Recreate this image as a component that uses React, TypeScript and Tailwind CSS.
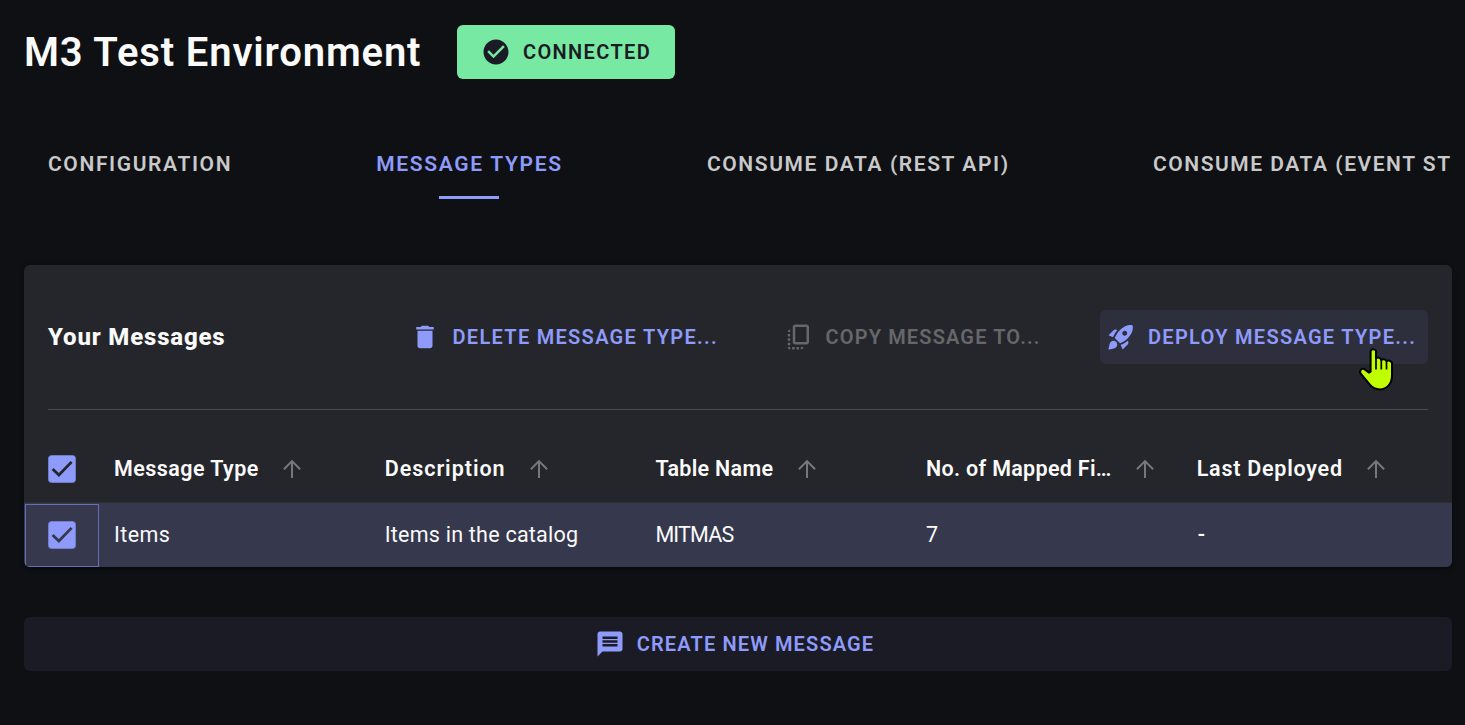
import type { ReactNode } from "react";
import { MdCheckCircle, MdCopyAll, MdDelete, MdMessage, MdRocketLaunch } from "react-icons/md";

function Checkbox() {
  return (
    <svg className="size-7" viewBox="0 0 28 28" fill="none">
      <rect x="0.5" y="0.5" width="27" height="27" rx="3" fill="#8f9bfb" stroke="#7782d4" strokeOpacity="0.8" />
      <path d="M4.6 14 10.9 20 23.6 6.9" stroke="currentColor" strokeWidth="2.8" />
    </svg>
  );
}

function SortArrow() {
  return (
    <svg className="h-5 w-[18px] shrink-0" viewBox="0 0 18 20" fill="none" stroke="#77787b" strokeWidth="2">
      <path d="M9 19V2.2M0.9 10.2 9 2.1 17.1 10.2" />
    </svg>
  );
}

function HeaderCell({ label, spacing }: { label: string; spacing: string }) {
  return (
    <div className="flex items-center gap-[24.500px] whitespace-nowrap">
      <span className={`pt-px ${spacing}`}>{label}</span>
      <SortArrow />
    </div>
  );
}

function ToolButton({ icon, children, className }: { icon: ReactNode; children: ReactNode; className: string }) {
  return (
    <button className={`flex h-[54px] items-center whitespace-nowrap rounded-md text-xl font-semibold ${className}`}>
      {icon}
      {children}
    </button>
  );
}

function HandCursor() {
  return (
    <svg className="absolute top-[36px] left-[258px] h-[46px] w-[37px]" viewBox="0 0 37 46" fill="none">
      <path
        d="M12.6 25.6V5.2a2.8 2.8 0 0 1 5.4 0V12.4q2.6-2.4 5.3 1.4 3-1.6 5.2 1.2 3.6-1.4 5.5 1.6V29.500C34 38 28.600 43.400 22 43.400 17.200 43.400 14.200 41.600 11.600 38.400L2.600 27.400C1 25 3.500 21.700 6.500 23.200L11 26.600Z"
        fill="#c0ff00"
        stroke="#000"
        strokeWidth="2"
        strokeLinejoin="round"
      />
      <path d="M18 12V23.500M23.300 13.800V23.500M28.500 15V23.500" stroke="#000" strokeWidth="1.7" />
    </svg>
  );
}

export default function App() {
  return (
    <main className="h-[725px] w-full overflow-hidden bg-[#0f1013] pl-6 font-[Roboto,sans-serif] text-[#fafafa]">
      <header className="flex items-center gap-9 pt-[25px]">
        <h1 className="w-[397px] whitespace-nowrap pt-px text-[40px] leading-[53px] font-semibold tracking-[0.85px]">
          M3 Test Environment
        </h1>
        <div className="flex h-[54px] w-[218px] items-center gap-[12px] rounded-md bg-[#78e9a2] pl-6 text-xl font-semibold tracking-[1.36px] text-[#1a1b24]">
          <MdCheckCircle className="size-[30px]" />
          CONNECTED
        </div>
      </header>

      <nav className="mt-[57px] grid grid-cols-[327px_331px_447px_1fr] pl-6 text-[21px] leading-[56px] font-semibold whitespace-nowrap text-[#c8c9ca]">
        <a className="tracking-[1.62px]">CONFIGURATION</a>
        <a className="flex w-[188px] flex-col items-center text-[#8f9bfb]">
          <span className="pl-px tracking-[1.68px]">MESSAGE TYPES</span>
          <span className="mt-1 h-[3px] w-[60px] bg-[#8f9bfb]" />
        </a>
        <a className="pl-px tracking-[1.58px]">CONSUME DATA (REST API)</a>
        <a className="tracking-[1.53px]">CONSUME DATA (EVENT ST</a>
      </nav>

      <section className="mt-[66px] h-[302px] w-[1428px] overflow-hidden rounded-md bg-[#25262b] shadow-[0_2px_5px_rgba(0,0,0,0.45)]">
        <div className="mx-6 flex h-[145px] items-center border-b border-[#4b4c4f]">
          <h2 className="w-[362px] text-2xl font-extrabold tracking-[0.83px]">Your Messages</h2>
          <ToolButton className="w-[374px] gap-[12.500px] tracking-[1.3px] text-[#8f9bfb]" icon={<MdDelete className="size-[30px]" />}>
            DELETE MESSAGE TYPE...
          </ToolButton>
          <ToolButton className="w-[316px] gap-[11.500px] tracking-[1.15px] text-[#66676a]" icon={<MdCopyAll className="size-[30px]" />}>
            COPY MESSAGE TO...
          </ToolButton>
          <div className="relative">
            <ToolButton className="w-[328px] gap-[12.500px] bg-[#2e2f3d] pl-[5.500px] tracking-[1.3px] text-[#8f9bfb]" icon={<MdRocketLaunch className="size-[30px]" />}>
              DEPLOY MESSAGE TYPE...
            </ToolButton>
            <HandCursor />
          </div>
        </div>

        <div className="mt-[26px] grid h-[67px] grid-cols-[90px_repeat(5,270.700px)] items-center border-b border-[#30302f] text-[21.5px] font-semibold">
          <div className="pl-6 text-[#25262b]">
            <Checkbox />
          </div>
          <HeaderCell label="Message Type" spacing="tracking-[0.45px]" />
          <HeaderCell label="Description" spacing="tracking-[0.97px]" />
          <HeaderCell label="Table Name" spacing="tracking-[0.3px]" />
          <HeaderCell label="No. of Mapped Fi…" spacing="tracking-[0.3px]" />
          <HeaderCell label="Last Deployed" spacing="tracking-[0.75px]" />
        </div>

        <div className="grid h-16 grid-cols-[90px_repeat(5,270.700px)] items-center bg-[#36384d] text-[21.5px]">
          <div className="mt-px ml-px flex h-[63px] w-[74px] items-center border border-[#666fb5] pb-[2px] pl-[22px] text-[#36384d]">
            <Checkbox />
          </div>
          <span className="pt-px tracking-[0.4px]">Items</span>
          <span className="pt-px tracking-[0.24px]">Items in the catalog</span>
          <span className="pt-px tracking-[-0.8px]">MITMAS</span>
          <span className="pt-px">7</span>
          <span className="pt-px pl-px font-medium">-</span>
        </div>
      </section>

      <button className="mt-[50px] flex h-[54px] w-[1428px] items-center justify-center gap-[12px] rounded-md bg-[#1a1b25] pr-[7px] text-xl font-semibold tracking-[1.14px] text-[#8f9bfb]">
        <MdMessage className="size-[30px]" />
        CREATE NEW MESSAGE
      </button>
    </main>
  );
}
